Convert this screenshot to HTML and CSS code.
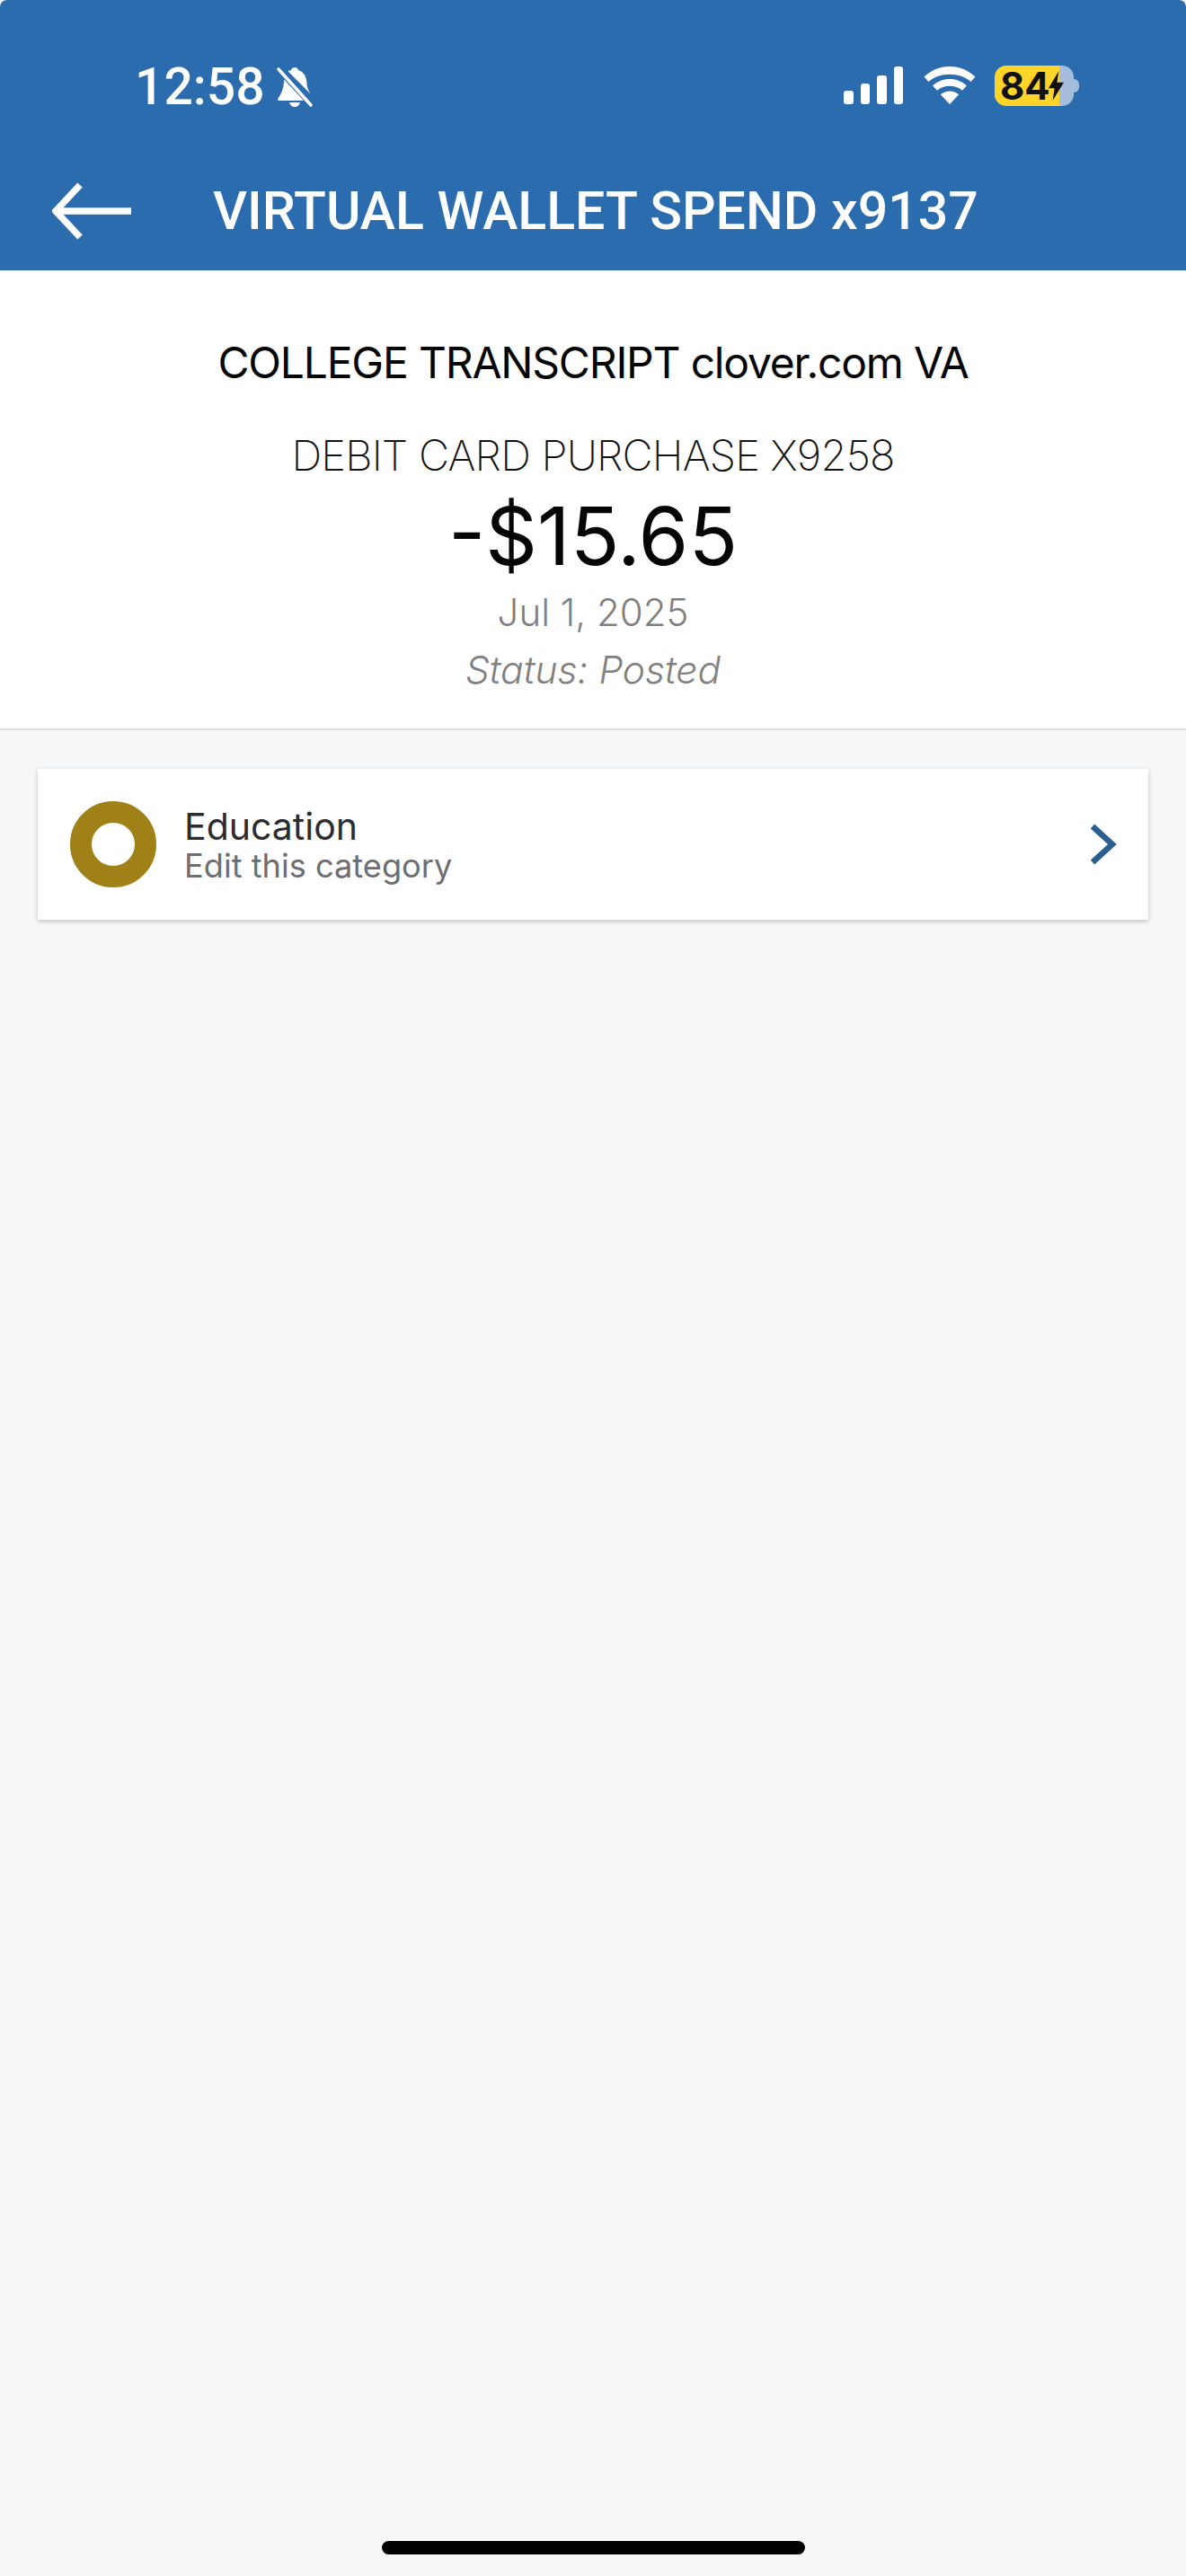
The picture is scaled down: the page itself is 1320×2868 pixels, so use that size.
FILE: index.html
```html
<!DOCTYPE html>
<html lang="en">
<head>
<meta charset="utf-8">
<title>Virtual Wallet Spend</title>
<link rel="stylesheet" href="styles.css">
</head>
<body>
<div class="screen">
  <header class="header">
    <div class="status">
      <div class="status-left">
        <span class="time">12:58</span>
        <svg class="bell" viewBox="0 0 42 46" aria-hidden="true">
          <path fill="#fff" d="M21 1c2.200 0 3.800 1.300 4.200 3.200 5.800 1.700 8.600 6.500 9.100 13 .4 5.500 1.500 9.800 5.200 14.300L13.500 5.200C15 4.400 16.200 4.400 16.800 4.200 17.200 2.300 18.800 1 21 1zM9.300 14.500L31 38H4c-1.600 0-2.400-1.300-1.500-2.600 3.600-4.800 6-10 6.800-20.900zM15 40h12c-.6 2.900-3 5-6 5s-5.400-2.100-6-5z"/>
          <path stroke="#fff" stroke-width="3.500" stroke-linecap="round" d="M3 3l36 40"/>
        </svg>
      </div>
      <div class="status-right">
        <div class="signal"><i class="b1"></i><i class="b2"></i><i class="b3"></i><i class="b4"></i></div>
        <svg class="wifi" viewBox="0 0 58 42" aria-hidden="true">
          <path fill="#fff" d="M29 0c11 0 21 4.300 28.500 11.500l-5 5.500C46.500 11.500 38 8.700 29 8.700S11.500 11.500 5.500 17l-5-5.500C8 4.300 18 0 29 0z"/>
          <path fill="#fff" d="M29 14c7.200 0 13.800 2.700 19 7.300l-5 5.500C39.200 23.500 34.300 21.800 29 21.800s-10.200 1.700-14 5l-5-5.500C15.200 16.700 21.800 14 29 14z"/>
          <path fill="#fff" d="M29 27.500c3.900 0 7.400 1.400 10.200 3.800L29 42 18.800 31.300c2.800-2.400 6.300-3.800 10.200-3.800z"/>
        </svg>
        <div class="battery">
          <div class="batt-body">
            <span class="batt-num">84</span>
            <svg class="bolt" viewBox="0 0 20 34" aria-hidden="true"><path fill="#111" d="M13 0L1 20h7L6 34 19 13h-8z"/></svg>
          </div>
          <div class="batt-cap"></div>
        </div>
      </div>
    </div>
    <div class="nav">
      <svg class="back" viewBox="0 0 88 64" aria-hidden="true">
        <path fill="none" stroke="#fff" stroke-width="7.500" d="M31 3L4 32l27 29M4 32h84"/>
      </svg>
      <h1 class="title">VIRTUAL WALLET SPEND x9137</h1>
    </div>
  </header>
  <section class="summary">
    <div class="merchant">COLLEGE TRANSCRIPT clover.com VA</div>
    <div class="desc">DEBIT CARD PURCHASE X9258</div>
    <div class="amount">-$15.65</div>
    <div class="date">Jul 1, 2025</div>
    <div class="state">Status: Posted</div>
  </section>
  <main class="content">
    <div class="card">
      <div class="ring"></div>
      <div class="card-text">
        <div class="cat">Education</div>
        <div class="edit">Edit this category</div>
      </div>
      <svg class="chev" viewBox="0 0 32 48" aria-hidden="true">
        <path fill="none" stroke="#2b5f90" stroke-width="6.500" d="M4 4l22 20L4 44"/>
      </svg>
    </div>
  </main>
  <div class="home-bar"></div>
</div>
</body>
</html>
```
FILE: styles.css
```css
* { box-sizing: border-box; }
html, body { margin: 0; padding: 0; background: #fff; }
.screen {
  width: 1320px;
  height: 2868px;
  display: flex;
  flex-direction: column;
  background: #f6f7f9;
  font-family: Inter, "Liberation Sans", sans-serif;
}
.header {
  height: 301px;
  flex: none;
  background: #2b6cae;
  color: #fff;
  border-radius: 8px 8px 0 0;
}
.status {
  height: 190px;
  display: flex;
  justify-content: space-between;
  padding: 72px 119px 0 150px;
  align-items: flex-start;
}
.status-left { display: flex; align-items: center; gap: 12px; height: 50px; }
.time {
  font-family: Roboto, sans-serif;
  font-weight: 500;
  font-size: 57px;
  line-height: 50px;
}
.bell { width: 42px; height: 46px; }
.status-right { display: flex; align-items: center; height: 46px; gap: 23px; }
.signal { display: flex; align-items: flex-end; gap: 8px; height: 42px; margin-left: -2px; }
.signal i { display: block; width: 10.500px; background: #fff; border-radius: 3px; }
.b1 { height: 15px; }
.b2 { height: 23px; }
.b3 { height: 32px; }
.b4 { height: 42px; }
.wifi { width: 58px; height: 42px; }
.battery { display: flex; align-items: center; margin-left: -2px; }
.batt-body {
  width: 88px;
  height: 45px;
  border-radius: 13px;
  background: linear-gradient(90deg, #ffd52a 0 72px, #a6bedb 72px);
  display: flex;
  align-items: center;
  padding-left: 6px;
}
.batt-num {
  font-family: Inter, sans-serif;
  font-weight: 700;
  font-size: 42px;
  line-height: 45px;
  color: #111;
}
.bolt { width: 19px; height: 33px; margin-left: -3px; }
.batt-cap {
  width: 6px;
  height: 15px;
  background: #a6bedb;
  border-radius: 0 8px 8px 0;
}
.nav { height: 111px; display: flex; align-items: flex-start; padding: 13px 0 0 58px; }
.back { width: 88px; height: 64px; flex: none; }
.title {
  margin: 2px 0 0 91px;
  font-family: Roboto, sans-serif;
  font-weight: 500;
  font-size: 59px;
  line-height: 60px;
  white-space: nowrap;
}
.summary {
  height: 512px;
  flex: none;
  background: #fff;
  border-bottom: 2px solid #dcdddf;
  text-align: center;
  padding-top: 76px;
}
.merchant { font-size: 48px; letter-spacing: -1.200px; line-height: 54px; color: #050505; }
.desc { font-size: 47px; letter-spacing: -.800px; line-height: 54px; font-weight: 200; color: #111; margin-top: 49px; }
.amount { font-size: 90px; line-height: 100px; color: #050505; margin-top: 13px; }
.date { font-size: 42px; line-height: 48px; color: #808080; margin-top: 11px; font-weight: 300; }
.state { font-size: 42.500px; line-height: 48px; color: #808080; font-style: italic; margin-top: 16px; font-weight: 300; }
.content { flex: 1; padding: 43px 42px 0; }
.card {
  height: 168px;
  background: #fff;
  display: flex;
  align-items: center;
  padding: 0 34px 0 36px;
  box-shadow: 0 2px 5px rgba(0, 0, 0, .22);
}
.ring { width: 96px; height: 96px; border: 24px solid #a08117; border-radius: 50%; flex: none; }
.card-text { flex: 1; margin-left: 31px; }
.cat { font-size: 41px; line-height: 46px; color: #2c2c2e; }
.edit { font-size: 36.200px; line-height: 40px; color: #6e6e72; margin-top: 1px; }
.chev { width: 32px; height: 48px; flex: none; }
.home-bar {
  position: absolute;
  left: 425px;
  top: 2829px;
  width: 471px;
  height: 15px;
  border-radius: 8px;
  background: #000;
}
```
